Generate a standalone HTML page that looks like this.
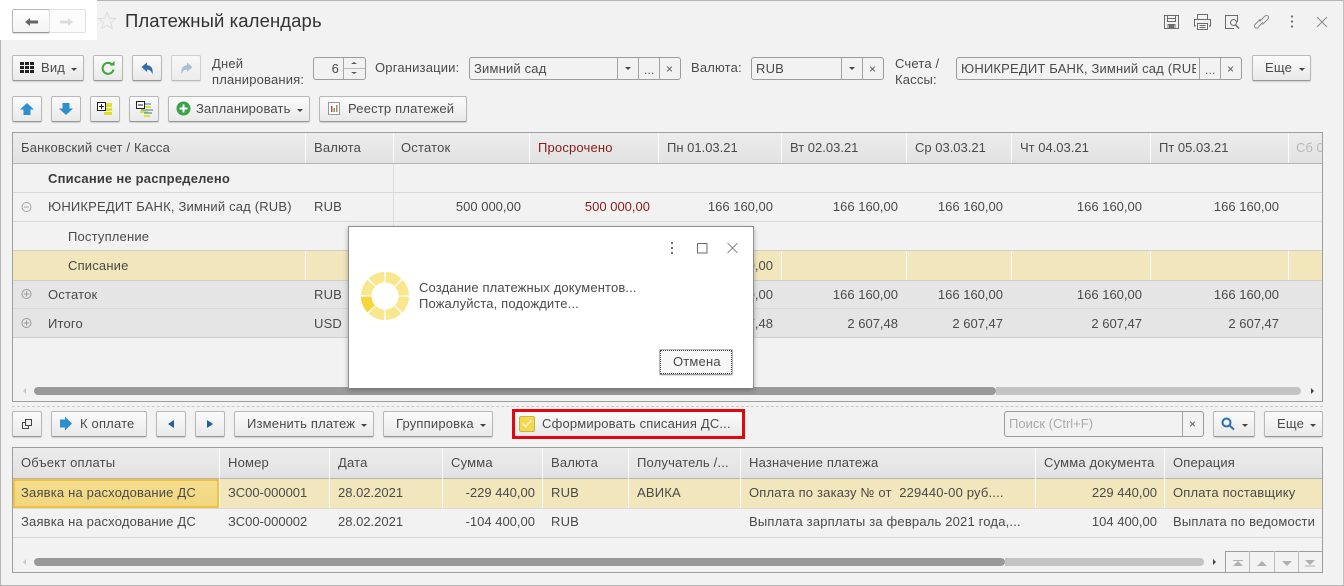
<!DOCTYPE html>
<html lang="ru"><head><meta charset="utf-8"><title>Платежный календарь</title>
<style>
html,body{margin:0;padding:0}
body{width:1344px;height:586px;overflow:hidden;position:relative;background:#f2f2f2;font:13px/16px "Liberation Sans","Noto Sans CJK JP",sans-serif;color:#4a4a4a}
div,span,svg{position:absolute;box-sizing:border-box}
.t{white-space:nowrap;letter-spacing:.18px}
.t.r,.t.d{letter-spacing:0}
.r{text-align:right}
.b{background:linear-gradient(#fbfbfb,#e9e9e9);border:1px solid #b8b8b8;border-bottom:1px solid #979797;border-radius:2px;box-shadow:0 1px 1px rgba(0,0,0,.14)}
.f{background:#f2f2f2;border:1px solid #9c9c9c;border-radius:3px;height:23px;top:57px}
.v{width:1px;background:#a5a5a5;top:0;bottom:0}
.tb{border:1px solid #9e9e9e;background:#f2f2f2;overflow:hidden}
.h{background:linear-gradient(#ececec,#e2e2e2)}
.c{width:1px;background:#fbfbfb}
.l{left:0;right:0;height:1px;background:#d8d8d8}
.tri{width:0;height:0;border-left:3px solid transparent;border-right:3px solid transparent;border-top:3px solid #444}
.x{font-size:12px;color:#555}
</style></head><body>
<!-- page frame -->
<div style="left:0;top:0;width:1344px;height:586px;border:1px solid #b5b5b5;border-right-color:#c0c0c0"></div>
<div style="left:0;top:0;width:97px;height:40px;background:#fff"></div>

<!-- nav -->
<div class="b" style="left:12px;top:9px;width:38px;height:24px;background:linear-gradient(#fff,#f3f3f3)"></div>
<div class="b" style="left:49px;top:9px;width:37px;height:24px;background:#fbfbfb;border-color:#e2e2e2;box-shadow:none"></div>
<svg style="left:24px;top:16px" width="15" height="12"><path d="M1 6L6 2V4.500H14V7.500H6V10Z" fill="#666"/></svg>
<svg style="left:59px;top:16px" width="15" height="12"><path d="M14 6L9 2V4.500H1V7.500H9V10Z" fill="#dcdcdc"/></svg>
<svg style="left:97px;top:10px" width="20" height="22"><path d="M10 2.500L12.300 8.200L18.500 8.600L13.700 12.500L15.300 18.500L10 15.200L4.700 18.500L6.300 12.500L1.500 8.600L7.700 8.200Z" fill="none" stroke="#dcdcdc" stroke-width="1"/></svg>
<div class="t" style="left:125px;top:10px;font-size:18.5px;line-height:22px;color:#333;letter-spacing:.1px">Платежный календарь</div>

<!-- top-right icons -->
<svg style="left:1163px;top:13px" width="175" height="18" fill="none" stroke="#6a6a6a" stroke-width="1">
<path d="M1.500 2.500H15.500V15.500H1.500Z"/><path d="M4.500 2.500V8.500H12.500V2.500M4.500 5.500H12.500M5 15V11.500H12V15" /><rect x="6" y="12" width="5" height="3" fill="#6a6a6a" stroke="none"/>
<path d="M34.500 6V1.500H44.500V6M33 13H31.500V6.500H47.500V13H46M34.500 10.500H44.500V16.500H34.500ZM36.500 12.500H42.500M36.500 14.500H42.500"/>
<path d="M71 15.500H62.500V2.500H74.500V9"/><circle cx="70.500" cy="9.500" r="3"/><path d="M72.500 12L76 15.500" stroke-width="1.500"/>
<path d="M100 9L95 14.500C93 16.500 90 13.500 92 11.500L97.500 6M96.500 8.500L102 3C104 1 107 4 105 6L99.500 11.500" stroke="#8a8a8a"/>
<path d="M154 4L164 14M164 4L154 14" stroke="#8a8a8a"/>
<circle cx="129" cy="3.500" r="1.100" fill="#666" stroke="none"/><circle cx="129" cy="8.500" r="1.100" fill="#666" stroke="none"/><circle cx="129" cy="13.500" r="1.100" fill="#666" stroke="none"/>
</svg>

<!-- toolbar 1 -->
<div class="b" style="left:12px;top:55px;width:72px;height:26px"></div>
<svg style="left:20px;top:62px" width="15" height="12" fill="#222"><path d="M0 0h4v3H0zM5 0h4v3H5zM10 0h4v3h-4zM0 4h4v3H0zM5 4h4v3H5zM10 4h4v3h-4zM0 8h4v3H0zM5 8h4v3H5zM10 8h4v3h-4z"/></svg>
<div class="t" style="left:41px;top:60px">Вид</div><div class="tri" style="left:71px;top:68px"></div>
<div class="b" style="left:93px;top:55px;width:30px;height:26px"></div>
<svg style="left:100px;top:60px" width="16" height="16"><path d="M12.500 5A5.500 5.500 0 1 0 13.500 9.500" fill="none" stroke="#3fa33f" stroke-width="2"/><path d="M9.500 5.500H14.500V1Z" fill="#3fa33f"/></svg>
<div class="b" style="left:132px;top:55px;width:30px;height:26px"></div>
<svg style="left:140px;top:61px" width="15" height="15"><path d="M1.500 6L7 1.500V4.200C11 4.200 13.500 7.500 12.500 13.500C11.500 10.300 9.800 8.500 7 8.500V11Z" fill="#2f6ea5"/></svg>
<div class="b" style="left:171px;top:55px;width:30px;height:26px;opacity:.6"></div>
<svg style="left:179px;top:61px" width="15" height="15"><path d="M13.500 6L8 1.500V4.200C4 4.200 1.500 7.500 2.500 13.500C3.500 10.300 5.200 8.500 8 8.500V11Z" fill="#a9bfd2"/></svg>
<div class="t" style="left:212px;top:56px;line-height:16px">Дней<br>планирования:</div>
<div class="f" style="left:313px;width:53px"><div class="v" style="left:29px"></div><div style="left:30px;right:0;top:10px;height:1px;background:#bbb"></div>
<div class="t" style="right:26px;top:3px">6</div></div>
<div class="tri" style="left:351px;top:62px;border-top:0;border-bottom:2px solid #555"></div><div class="tri" style="left:351px;top:72px;border-top:2px solid #555"></div>
<div class="t" style="left:375px;top:60px">Организации:</div>
<div class="f" style="left:469px;width:212px"><div class="v" style="left:147px"></div><div class="v" style="left:168px"></div><div class="v" style="left:189px"></div>
<div class="t" style="left:4px;top:3px">Зимний сад</div><div class="tri" style="left:155px;top:9px"></div><div class="t x" style="left:174px;top:4px">...</div><div class="t x" style="left:196px;top:3px">×</div></div>
<div class="t" style="left:691px;top:60px">Валюта:</div>
<div class="f" style="left:751px;width:133px"><div class="v" style="left:89px"></div><div class="v" style="left:110px"></div>
<div class="t" style="left:4px;top:3px">RUB</div><div class="tri" style="left:97px;top:9px"></div><div class="t x" style="left:117px;top:3px">×</div></div>
<div class="t" style="left:895px;top:56px">Счета /<br>Кассы:</div>
<div class="f" style="left:956px;width:286px"><div class="v" style="left:242px"></div><div class="v" style="left:263px"></div>
<div class="t" style="left:4px;top:3px;width:235px;overflow:hidden">ЮНИКРЕДИТ БАНК, Зимний сад (RUB)</div><div class="t x" style="left:248px;top:4px">...</div><div class="t x" style="left:270px;top:3px">×</div></div>
<div class="b" style="left:1252px;top:55px;width:59px;height:26px"></div>
<div class="t" style="left:1265px;top:60px">Еще</div><div class="tri" style="left:1299px;top:68px"></div>

<!-- toolbar 2 -->
<div class="b" style="left:12px;top:96px;width:30px;height:26px"></div>
<svg style="left:19px;top:102px" width="16" height="14"><path d="M8 1L15 7.500H11.500V13H4.500V7.500H1Z" fill="#2d8fd0"/></svg>
<div class="b" style="left:51px;top:96px;width:30px;height:26px"></div>
<svg style="left:58px;top:102px" width="16" height="14"><path d="M8 13L15 6.500H11.500V1H4.500V6.500H1Z" fill="#2d8fd0"/></svg>
<div class="b" style="left:90px;top:96px;width:30px;height:26px"></div>
<svg style="left:97px;top:100px" width="16" height="16"><path d="M9 3h6v4H9zM7 8h8v3H7zM7 12h8v3H7z" fill="#dfe02e"/><rect x=".5" y="2.500" width="8" height="8" fill="#fff" stroke="#222"/><path d="M2 6.500h5M4.500 4v5" stroke="#222"/></svg>
<div class="b" style="left:129px;top:96px;width:30px;height:26px"></div>
<svg style="left:136px;top:100px" width="18" height="18"><path d="M4 11h8v2H4zM8 15h6v2H8zM9 6h6v2H9z" fill="#dfe02e"/><path d="M9 4h6M5 10h12M8 13h8" stroke="#2e7d9e"/><rect x=".5" y="1.500" width="8" height="7" fill="#fff" stroke="#222"/><path d="M2 5h5" stroke="#222"/></svg>
<div class="b" style="left:168px;top:96px;width:142px;height:26px"></div>
<svg style="left:176px;top:101px" width="15" height="15"><circle cx="7.500" cy="7.500" r="7" fill="#39a24a"/><path d="M7.500 3.500v8M3.500 7.500h8" stroke="#fff" stroke-width="2"/></svg>
<div class="t" style="left:196px;top:101px">Запланировать</div><div class="tri" style="left:297px;top:109px"></div>
<div class="b" style="left:319px;top:96px;width:148px;height:26px"></div>
<svg style="left:328px;top:102px" width="13" height="14"><rect x=".5" y=".5" width="11" height="12" fill="#fff" stroke="#999"/><path d="M3 4h1.500v6H3z" fill="#c44"/><path d="M5.500 6H7v4H5.500z" fill="#5a5"/><path d="M8 3h1.500v7H8z" fill="#c77"/></svg>
<div class="t" style="left:348px;top:101px">Реестр платежей</div>

<!-- upper table -->
<div class="tb" style="left:12px;top:132px;width:1311px;height:270px">
 <div class="h" style="left:0;top:0;width:1311px;height:30px"></div>
 <div style="left:0;top:30px;right:0;height:1px;background:#b4b4b4"></div>
 <div style="left:0;top:147px;right:0;height:58px;background:#e5e5e5"></div>
 <div style="left:0;top:118px;right:0;height:29px;background:#f1e6bc"></div>
 <div class="l" style="top:59px"></div><div class="l" style="top:88px"></div><div class="l" style="top:117px;background:#cfcfcf"></div><div class="l" style="top:147px;background:#cfcfcf"></div><div class="l" style="top:175px"></div><div class="l" style="top:204px;background:#d0d0d0"></div>
 <div class="c" style="left:292px;top:0;height:30px"></div><div class="c" style="left:380px;top:0;height:30px"></div><div class="c" style="left:516px;top:0;height:30px"></div><div class="c" style="left:645px;top:0;height:30px"></div><div class="c" style="left:768px;top:0;height:30px"></div><div class="c" style="left:893px;top:0;height:30px"></div><div class="c" style="left:998px;top:0;height:30px"></div><div class="c" style="left:1137px;top:0;height:30px"></div><div class="c" style="left:1275px;top:0;height:30px"></div>
 <div class="c" style="left:380px;top:31px;height:173px;background:#dcdcdc"></div>
 <div class="c" style="left:292px;top:118px;height:29px"></div><div class="c" style="left:768px;top:118px;height:29px"></div><div class="c" style="left:893px;top:118px;height:29px"></div><div class="c" style="left:998px;top:118px;height:29px"></div><div class="c" style="left:1137px;top:118px;height:29px"></div><div class="c" style="left:1275px;top:118px;height:29px"></div>
 <div style="left:21px;top:254px;width:962px;height:8px;background:#999;border-radius:4px"></div>
 <div style="left:983px;top:254px;width:305px;height:8px;background:#c4c4c4;border-radius:0 4px 4px 0"></div>
 <div style="left:10px;top:255px;width:0;height:0;border:3px solid transparent;border-right-color:#c8c8c8;border-left:0"></div>
 <div style="left:1298px;top:255px;width:0;height:0;border:3px solid transparent;border-left-color:#444;border-right:0"></div>
</div>
<div class="t" style="left:21px;top:140px">Банковский счет / Касса</div>
<div class="t" style="left:314px;top:140px">Валюта</div>
<div class="t" style="left:401px;top:140px">Остаток</div>
<div class="t" style="left:538px;top:140px;color:#8b1a1a">Просрочено</div>
<div class="t d" style="left:667px;top:140px">Пн 01.03.21</div>
<div class="t d" style="left:790px;top:140px">Вт 02.03.21</div>
<div class="t d" style="left:915px;top:140px">Ср 03.03.21</div>
<div class="t d" style="left:1020px;top:140px">Чт 04.03.21</div>
<div class="t d" style="left:1159px;top:140px">Пт 05.03.21</div>
<div class="t d" style="left:1296px;top:140px;width:26px;overflow:hidden;color:#b8b8b8">Сб 06</div>

<div class="t" style="left:48px;top:171px;font-weight:bold;color:#3c3c3c;letter-spacing:.2px">Списание не распределено</div>
<svg style="left:21px;top:201px" width="12" height="12" fill="none" stroke="#a5a5a5"><circle cx="5.500" cy="6" r="4.500"/><path d="M3 6h5"/></svg>
<div class="t" style="left:48px;top:199px">ЮНИКРЕДИТ БАНК, Зимний сад (RUB)</div>
<div class="t" style="left:314px;top:199px">RUB</div>
<div class="t" style="left:68px;top:229px">Поступление</div>
<div class="t" style="left:68px;top:258px">Списание</div>
<svg style="left:21px;top:288px" width="12" height="12" fill="none" stroke="#999"><circle cx="5.500" cy="6" r="4.500"/><path d="M3 6h5M5.500 3.500v5"/></svg>
<div class="t" style="left:48px;top:287px">Остаток</div><div class="t" style="left:314px;top:287px">RUB</div>
<svg style="left:21px;top:317px" width="12" height="12" fill="none" stroke="#999"><circle cx="5.500" cy="6" r="4.500"/><path d="M3 6h5M5.500 3.500v5"/></svg>
<div class="t" style="left:48px;top:316px">Итого</div><div class="t" style="left:314px;top:316px">USD</div>

<div class="t r" style="right:823px;top:199px">500 000,00</div>
<div class="t r" style="right:694px;top:199px;color:#8b1a1a">500 000,00</div>
<div class="t r" style="right:571px;top:199px">166 160,00</div>
<div class="t r" style="right:446px;top:199px">166 160,00</div>
<div class="t r" style="right:341px;top:199px">166 160,00</div>
<div class="t r" style="right:202px;top:199px">166 160,00</div>
<div class="t r" style="right:65px;top:199px">166 160,00</div>
<div class="t r" style="right:571px;top:258px">166 160,00</div>
<div class="t r" style="right:571px;top:287px">166 160,00</div>
<div class="t r" style="right:446px;top:287px">166 160,00</div>
<div class="t r" style="right:341px;top:287px">166 160,00</div>
<div class="t r" style="right:202px;top:287px">166 160,00</div>
<div class="t r" style="right:65px;top:287px">166 160,00</div>
<div class="t r" style="right:571px;top:316px">2 607,48</div>
<div class="t r" style="right:446px;top:316px">2 607,48</div>
<div class="t r" style="right:341px;top:316px">2 607,47</div>
<div class="t r" style="right:202px;top:316px">2 607,47</div>
<div class="t r" style="right:65px;top:316px">2 607,47</div>

<!-- dialog -->
<div style="left:348px;top:226px;width:406px;height:162px;background:#fff;border:1px solid #8f8f8f;border-bottom:0;box-shadow:0 2px 5px rgba(0,0,0,.28)"></div>
<svg style="left:665px;top:240px" width="76" height="16" fill="none" stroke="#6a6a6a">
<circle cx="7" cy="3" r="1.100" fill="#666" stroke="none"/><circle cx="7" cy="8" r="1.100" fill="#666" stroke="none"/><circle cx="7" cy="13" r="1.100" fill="#666" stroke="none"/>
<rect x="32.500" y="3.500" width="9.500" height="9.500"/><path d="M62.500 3L72.500 13M72.500 3L62.500 13" stroke="#8a8a8a"/></svg>
<svg style="left:360px;top:271px" width="50" height="50">
<g fill="none" stroke-width="10.500"><circle cx="25" cy="25" r="18.800" stroke="#f8e78c" stroke-dasharray="13.300 1.465" transform="rotate(2.200 25 25)"/>
<circle cx="25" cy="25" r="18.800" stroke="#f5d63d" stroke-dasharray="13.300 104.820" transform="rotate(137.200 25 25)"/></g></svg>
<div class="t" style="left:419px;top:280px;line-height:16px;letter-spacing:.14px">Создание платежных документов...<br>Пожалуйста, подождите...</div>
<div class="b" style="left:659px;top:349px;width:74px;height:26px;background:#f7f7f7"></div>
<div style="left:660px;top:350px;width:72px;height:24px;border:1px dotted #444"></div>
<div class="t" style="left:673px;top:354px">Отмена</div>

<!-- splitter -->
<div style="left:12px;top:406px;width:1311px;border-top:1px dashed #c8c8c8"></div>

<!-- toolbar 3 -->
<div class="b" style="left:12px;top:411px;width:30px;height:26px"></div>
<svg style="left:22px;top:419px" width="11" height="11" fill="none" stroke="#444"><rect x="3.500" y=".5" width="6" height="6"/><path d="M3 3.500H.5V9.500H6.500V7"/></svg>
<div class="b" style="left:51px;top:411px;width:96px;height:26px"></div>
<svg style="left:59px;top:416px" width="14" height="15"><path d="M1 3.500H6V0.500L13 7.500L6 14.500V11.500H1Z" fill="#2d8fd0"/></svg>
<div class="t" style="left:80px;top:416px">К оплате</div>
<div class="b" style="left:156px;top:411px;width:30px;height:26px"></div>
<svg style="left:168px;top:420px" width="7" height="8"><path d="M6 0V8L0 4Z" fill="#1f5f9e"/></svg>
<div class="b" style="left:195px;top:411px;width:30px;height:26px"></div>
<svg style="left:207px;top:420px" width="7" height="8"><path d="M0 0V8L6 4Z" fill="#1f5f9e"/></svg>
<div class="b" style="left:234px;top:411px;width:140px;height:26px"></div>
<div class="t" style="left:247px;top:416px">Изменить платеж</div><div class="tri" style="left:361px;top:424px"></div>
<div class="b" style="left:383px;top:411px;width:110px;height:26px"></div>
<div class="t" style="left:396px;top:416px">Группировка</div><div class="tri" style="left:480px;top:424px"></div>
<div class="b" style="left:514px;top:411px;width:229px;height:26px"></div>
<div style="left:512px;top:409px;width:233px;height:30px;border:3px solid #e2060f"></div>
<div style="left:519px;top:416px;width:16px;height:16px;background:#f4d84f;border:1px solid #c8b44c;border-radius:2px"></div>
<svg style="left:521px;top:419px" width="12" height="10"><path d="M1.500 4.500L4.500 7.500L10.500 1.500" fill="none" stroke="#f8f3d0" stroke-width="1.600"/></svg>
<div class="t" style="left:542px;top:416px">Сформировать списания ДС...</div>
<div style="left:1004px;top:411px;width:200px;height:26px;border:1px solid #9c9c9c;border-radius:3px"><div class="v" style="left:177px"></div><div class="t x" style="left:184px;top:4px">×</div></div>
<div class="t" style="left:1009px;top:416px;color:#aaa;letter-spacing:0">Поиск (Ctrl+F)</div>
<div class="b" style="left:1213px;top:411px;width:42px;height:26px"></div>
<svg style="left:1221px;top:417px" width="15" height="14" fill="none" stroke="#2770ad" stroke-width="2"><circle cx="5.500" cy="5.500" r="4"/><path d="M8.500 8.500L13 12.500"/></svg>
<div class="tri" style="left:1242px;top:424px"></div>
<div class="b" style="left:1264px;top:411px;width:59px;height:26px"></div>
<div class="t" style="left:1277px;top:416px">Еще</div><div class="tri" style="left:1310px;top:424px"></div>

<!-- lower table -->
<div class="tb" style="left:12px;top:447px;width:1311px;height:126px">
 <div class="h" style="left:0;top:0;width:1311px;height:30px"></div>
 <div style="left:0;top:30px;right:0;height:1px;background:#b4b4b4"></div>
 <div style="left:0;top:31px;right:0;height:29px;background:#f1e6bc"></div>
 <div class="l" style="top:60px"></div><div class="l" style="top:89px"></div>
 <div class="c" style="left:206px;top:0;height:60px"></div><div class="c" style="left:316px;top:0;height:60px"></div><div class="c" style="left:429px;top:0;height:60px"></div><div class="c" style="left:529px;top:0;height:60px"></div><div class="c" style="left:615px;top:0;height:60px"></div><div class="c" style="left:727px;top:0;height:60px"></div><div class="c" style="left:1022px;top:0;height:60px"></div><div class="c" style="left:1151px;top:0;height:60px"></div>
 <div style="left:0;top:31px;width:206px;height:29px;background:linear-gradient(#f5de90,#f1d67e);border:2px solid #efc23f"></div>
 <div style="left:21px;top:110px;width:971px;height:8px;background:#999;border-radius:4px"></div>
 <div style="left:992px;top:110px;width:199px;height:8px;background:#c4c4c4;border-radius:0 4px 4px 0"></div>
 <div style="left:10px;top:111px;width:0;height:0;border:3px solid transparent;border-right-color:#c8c8c8;border-left:0"></div>
 <div style="left:1200px;top:111px;width:0;height:0;border:3px solid transparent;border-left-color:#444;border-right:0"></div>
 <div style="left:1212px;top:103px;width:98px;height:22px;background:#f2f2f2;border-left:1px solid #9e9e9e;border-top:1px solid #9e9e9e"></div>
 <div class="v" style="left:1236px;top:103px;background:#bbb"></div><div class="v" style="left:1261px;top:103px;background:#bbb"></div><div class="v" style="left:1285px;top:103px;background:#bbb"></div>
</div>
<svg style="left:1226px;top:552px" width="96" height="20" fill="#b0b0b0"><path d="M7 8h10v1H7zM7 14L12 9L17 14Z"/><path d="M31 14L36 9L41 14Z"/><path d="M56 9L61 14L66 9Z"/><path d="M79 8L84 13L89 8ZM79 13.500h10v1H79z"/></svg>

<div class="t" style="left:21px;top:455px">Объект оплаты</div>
<div class="t" style="left:228px;top:455px">Номер</div>
<div class="t" style="left:338px;top:455px">Дата</div>
<div class="t" style="left:451px;top:455px">Сумма</div>
<div class="t" style="left:551px;top:455px">Валюта</div>
<div class="t" style="left:637px;top:455px">Получатель /...</div>
<div class="t" style="left:749px;top:455px">Назначение платежа</div>
<div class="t" style="left:1044px;top:455px">Сумма документа</div>
<div class="t" style="left:1173px;top:455px">Операция</div>

<div class="t" style="left:21px;top:485px">Заявка на расходование ДС</div>
<div class="t d" style="left:228px;top:485px">ЗС00-000001</div>
<div class="t d" style="left:338px;top:485px">28.02.2021</div>
<div class="t r" style="right:809px;top:485px">-229 440,00</div>
<div class="t" style="left:551px;top:485px">RUB</div>
<div class="t" style="left:637px;top:485px">АВИКА</div>
<div class="t" style="left:749px;top:485px">Оплата по заказу № от&nbsp; 229440-00 руб....</div>
<div class="t r" style="right:187px;top:485px">229 440,00</div>
<div class="t" style="left:1173px;top:485px">Оплата поставщику</div>

<div class="t" style="left:21px;top:514px">Заявка на расходование ДС</div>
<div class="t d" style="left:228px;top:514px">ЗС00-000002</div>
<div class="t d" style="left:338px;top:514px">28.02.2021</div>
<div class="t r" style="right:809px;top:514px">-104 400,00</div>
<div class="t" style="left:551px;top:514px">RUB</div>
<div class="t" style="left:749px;top:514px">Выплата зарплаты за февраль 2021 года,...</div>
<div class="t r" style="right:187px;top:514px">104 400,00</div>
<div class="t" style="left:1173px;top:514px">Выплата по ведомости</div>
</body></html>
